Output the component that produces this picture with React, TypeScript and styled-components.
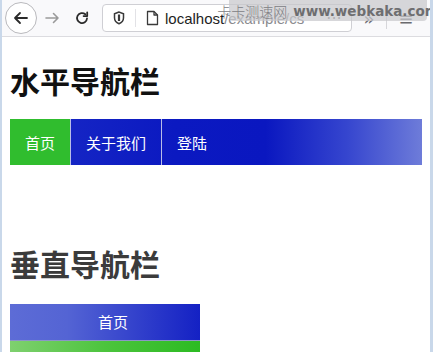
import styled, { createGlobalStyle } from 'styled-components'

const GlobalStyle = createGlobalStyle`
  html, body {
    margin: 0;
    padding: 0;
    background: #c9d8ea;
  }
  body {
    font-family: "Liberation Sans", "Noto Sans CJK SC", sans-serif;
  }
`

export default function App() {
  return (
    <>
      <GlobalStyle />
      <Frame>
        <Toolbar>
          <BackBtn>
            <svg width='18' height='18' viewBox='0 0 18 18' fill='none' stroke='#2b2b2b' strokeWidth='1.8' strokeLinecap='round' strokeLinejoin='round'>
              <path d='M15 9H3M8 4L3 9l5 5' />
            </svg>
          </BackBtn>
          <NavIcon>
            <svg width='16' height='16' viewBox='0 0 16 16' fill='none' stroke='#9a9a9a' strokeWidth='1.6' strokeLinecap='round' strokeLinejoin='round'>
              <path d='M2 8h12M9.5 3.5L14 8l-4.5 4.5' />
            </svg>
          </NavIcon>
          <NavIcon>
            <svg width='16' height='16' viewBox='0 0 16 16' fill='none' stroke='#2b2b2b' strokeWidth='1.8' strokeLinecap='round' strokeLinejoin='round'>
              <path d='M13 8.5A5 5 0 1 1 11.3 4.3' />
              <path d='M13.2 2.5v3.6H9.6' />
            </svg>
          </NavIcon>
          <UrlBar>
            <svg width='12' height='14' viewBox='0 0 12 14' fill='none' stroke='#3a3a3a' strokeWidth='1.5'>
              <path d='M6 1L1.5 2.8v4c0 3 2 5 4.5 6 2.5-1 4.5-3 4.5-6v-4z' />
              <path d='M6 3.5v6.5' strokeWidth='2.2' />
            </svg>
            <UrlDivider />
            <svg width='13' height='16' viewBox='0 0 13 16' fill='none' stroke='#3a3a3a' strokeWidth='1.3' strokeLinejoin='round'>
              <path d='M1.5 1.5h6.5l3.5 3.5v9.5h-10z' />
              <path d='M8 1.5v3.5h3.5' />
            </svg>
            <UrlText>
              localhost<UrlRest>/example/cs</UrlRest>
            </UrlText>
            <PageAction>···</PageAction>
          </UrlBar>
          <ToolGlyph>»</ToolGlyph>
          <ToolSep />
          <ToolGlyph>≡</ToolGlyph>
          <Watermark>
            <span>卡卡测速网</span>
            <b>www.webkaka.com</b>
          </Watermark>
        </Toolbar>
        <Page>
          <Title $muted={false}>水平导航栏</Title>
          <HorizontalNav>
            <HItem $active>首页</HItem>
            <HItem>关于我们</HItem>
            <HItem>登陆</HItem>
          </HorizontalNav>
          <Title $muted>垂直导航栏</Title>
          <VerticalNav>
            <VItem $tone='blue'>首页</VItem>
            <VItem $tone='green'>关于我们</VItem>
          </VerticalNav>
        </Page>
      </Frame>
    </>
  )
}

const Frame = styled.div`
  margin: 0 3px 0 2px;
  height: 352px;
  overflow: hidden;
  background: #fff;
`

const Toolbar = styled.div`
  position: relative;
  height: 37px;
  display: flex;
  align-items: center;
  padding-left: 3px;
  background: #f9f9fb;
  border-bottom: 1px solid #dcdce0;
  box-sizing: border-box;
`

const BackBtn = styled.div`
  width: 32px;
  height: 32px;
  border-radius: 50%;
  border: 1px solid #b9b9bd;
  box-sizing: border-box;
  display: flex;
  align-items: center;
  justify-content: center;
  background: #fff;
`

const NavIcon = styled.div`
  width: 30px;
  height: 30px;
  display: flex;
  align-items: center;
  justify-content: center;
`

const UrlBar = styled.div`
  margin-left: 5px;
  width: 250px;
  height: 28px;
  border: 1px solid #cfcfd4;
  border-radius: 4px;
  box-sizing: border-box;
  background: #fff;
  display: flex;
  align-items: center;
  padding-left: 10px;
  gap: 8px;
  overflow: hidden;
`

const UrlDivider = styled.div`
  width: 1px;
  height: 18px;
  background: #e2e2e6;
  margin: 0 2px;
`

const UrlText = styled.span`
  flex: 1;
  font-family: "Liberation Sans", sans-serif;
  font-size: 15px;
  color: #1e1e1e;
  white-space: nowrap;
  overflow: hidden;
  margin-left: -2px;
`

const UrlRest = styled.span`
  color: #8a8a8e;
`

const PageAction = styled.span`
  width: 26px;
  margin-right: 4px;
  text-align: center;
  font-size: 16px;
  color: #7a7a7e;
  font-family: "DejaVu Sans", sans-serif;
`

const ToolGlyph = styled.span`
  width: 30px;
  margin-left: 2px;
  text-align: center;
  font-size: 18px;
  color: #6a6a6e;
  font-family: "DejaVu Sans", sans-serif;
`

const ToolSep = styled.div`
  width: 1px;
  height: 22px;
  background: #d6d6da;
  margin: 0 2px;
`

const Watermark = styled.div`
  position: absolute;
  top: 0;
  left: 227px;
  width: 198px;
  height: 21px;
  border-radius: 0 0 4px 4px;
  background: rgba(200, 200, 204, 0.72);
  display: flex;
  align-items: center;
  justify-content: center;
  gap: 6px;
  color: #6e6e70;
  font-size: 14px;
  white-space: nowrap;

  & span {
    font-family: "Noto Sans CJK SC", sans-serif;
    font-weight: 300;
    color: #808084;
  }

  & b {
    font-family: "DejaVu Sans", sans-serif;
    font-size: 13.5px;
    font-weight: bold;
  }
`

const Page = styled.div`
  padding: 0 0 0 8px;
  margin-right: 8px;
  display: flex;
  flex-direction: column;
  font-family: "Noto Sans CJK SC", sans-serif;
`

const Title = styled.h1<{ $muted: boolean }>`
  font-size: 30px;
  line-height: 36px;
  font-weight: bold;
  margin: 25px 0 21px;
  color: ${(p) => (p.$muted ? '#3b3b3b' : '#111')};

  & + nav + & {
    margin-top: 80px;
    margin-bottom: 23px;
  }
`

const HorizontalNav = styled.nav`
  display: flex;
  height: 46px;
  background: linear-gradient(to right, #1a2bc6 0%, #0b19c1 40%, #0a17c0 62%, #3646cf 82%, #6e7cd9 100%);
`

const HItem = styled.a<{ $active?: boolean }>`
  display: flex;
  align-items: center;
  padding: 0 15px;
  font-size: 15px;
  color: #fff;
  border-right: 1px solid #b8bde8;
  background: ${(p) => (p.$active ? '#30bd2e' : 'transparent')};

  &:last-child {
    border-right: none;
  }
`

const VerticalNav = styled.nav`
  width: 190px;
  display: flex;
  flex-direction: column;
`

const VItem = styled.a<{ $tone: 'blue' | 'green' }>`
  display: block;
  height: 36px;
  line-height: 36px;
  padding-left: 16px;
  text-align: center;
  font-size: 15px;
  color: #fff;
  border-bottom: 1px solid #8d95c8;
  background: ${(p) =>
    p.$tone === 'blue'
      ? 'linear-gradient(to right, #5d6cd6 0%, #5464d4 30%, #1421c4 100%)'
      : 'linear-gradient(to right, #7fd06f 0%, #4cc43d 50%, #2cbb22 100%)'};
`
